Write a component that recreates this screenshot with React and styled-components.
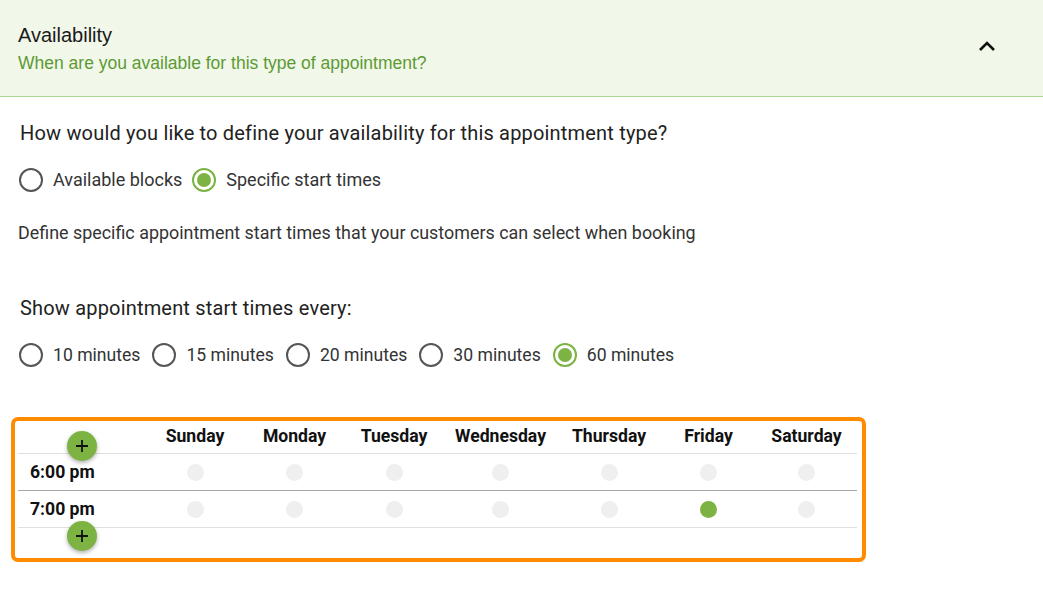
import React, { useState } from "react";
import styled, { createGlobalStyle } from "styled-components";

const GlobalStyle = createGlobalStyle`
  body {
    margin: 0;
    background: #fff;
    font-family: Roboto, "Liberation Sans", sans-serif;
    color: #222;
  }
`;

const GREEN = "#7cb342";
const DAYS = ["Sunday", "Monday", "Tuesday", "Wednesday", "Thursday", "Friday", "Saturday"];
const COLS = "127px 100px 99px 100px 113px 104px 95px 101px";

const Header = styled.div`
  height: 96px;
  background: #f1f8e9;
  border-bottom: 1px solid #aed58e;
  display: flex;
  align-items: center;
  justify-content: space-between;
  padding: 0 47px 0 18px;
  font-family: "Liberation Sans", Arial, sans-serif;
`;
const TitleBlock = styled.div`
  display: flex;
  flex-direction: column;
  gap: 6px;
`;
const Title = styled.div`
  font-size: 20px;
  line-height: 23px;
  color: #1a1a1a;
`;
const Subtitle = styled.div`
  font-size: 17.5px;
  line-height: 20px;
  color: #5d9a35;
`;
const Chevron = styled.svg`
  width: 18px;
  height: 12px;
  margin-top: -4px;
`;

const Body = styled.div`
  padding: 24px 0 0 18px;
`;
const Question = styled.div`
  font-size: 20px;
  letter-spacing: 0.18px;
  padding-left: 2px;
  line-height: 24px;
  color: #222;
`;
const RadioRow = styled.div`
  display: flex;
  align-items: center;
  gap: ${(p) => p.$gap}px;
  margin-top: 23px;
  padding-left: 1px;
`;
const RadioItem = styled.label`
  display: flex;
  align-items: center;
  gap: 10px;
  font-size: ${(p) => p.$fs}px;
  line-height: 24px;
  color: #333;
  cursor: pointer;
`;
const RadioCircle = styled.span`
  width: 24px;
  height: 24px;
  box-sizing: border-box;
  border-radius: 50%;
  border: 2px solid ${(p) => (p.$on ? GREEN : "#555")};
  display: flex;
  align-items: center;
  justify-content: center;
  &::after {
    content: "";
    width: 14px;
    height: 14px;
    border-radius: 50%;
    background: ${(p) => (p.$on ? GREEN : "transparent")};
  }
`;
const Note = styled.div`
  font-size: 17.9px;
  color: #333;
  margin-top: 29px;
  line-height: 24px;
`;
const SubQuestion = styled(Question)`
  margin-top: 51px;
`;

const TableBox = styled.div`
  margin: 50px 0 0 -7px;
  width: 839px;
  border: 4px solid #ff8c00;
  border-radius: 7px;
  padding: 0 5px 0 3px;
  box-sizing: content-box;
`;
const Row = styled.div`
  display: grid;
  grid-template-columns: ${COLS};
  height: ${(p) => p.$h}px;
  align-items: center;
  border-bottom: ${(p) => (p.$line ? `1px solid ${p.$line}` : "none")};
`;
const DayHead = styled.div`
  text-align: center;
  font-weight: 700;
  font-size: 17.6px;
  color: #111;
  padding-bottom: 2px;
`;
const TimeCell = styled.div`
  font-weight: 700;
  font-size: 17.6px;
  color: #111;
  padding-left: 12px;
  height: 100%;
  display: flex;
  align-items: ${(p) => p.$align || "center"};
`;
const PlusButton = styled.button`
  position: relative;
  z-index: 1;
  width: 30px;
  height: 30px;
  border-radius: 50%;
  border: none;
  padding: 0;
  margin-left: 37px;
  background: ${GREEN};
  box-shadow: 0 2px 4px rgba(0, 0, 0, 0.3);
  display: flex;
  align-items: center;
  justify-content: center;
  cursor: pointer;
  margin-top: ${(p) => p.$mt || 0}px;
  margin-bottom: ${(p) => p.$mb || 0}px;
`;
const DotCell = styled.div`
  display: flex;
  justify-content: center;
`;
const Dot = styled.span`
  width: 17px;
  height: 17px;
  border-radius: 50%;
  background: ${(p) => (p.$on ? GREEN : "#efefef")};
  cursor: pointer;
`;

const PlusIcon = () => (
  <svg width="14" height="14" viewBox="0 0 14 14">
    <path d="M7 1v12M1 7h12" stroke="#111" strokeWidth="1.8" />
  </svg>
);

function Radios({ options, value, onChange, fs, gap }) {
  return (
    <RadioRow $gap={gap}>
      {options.map((o) => (
        <RadioItem key={o} $fs={fs} onClick={() => onChange(o)}>
          <RadioCircle $on={value === o} />
          {o}
        </RadioItem>
      ))}
    </RadioRow>
  );
}

export default function App() {
  const [mode, setMode] = useState("Specific start times");
  const [every, setEvery] = useState("60 minutes");
  const [slots, setSlots] = useState({ "7:00 pm-Friday": true });
  const times = ["6:00 pm", "7:00 pm"];

  const toggle = (k) => setSlots((s) => ({ ...s, [k]: !s[k] }));

  return (
    <>
      <GlobalStyle />
      <Header>
        <TitleBlock>
          <Title>Availability</Title>
          <Subtitle>When are you available for this type of appointment?</Subtitle>
        </TitleBlock>
        <Chevron viewBox="0 0 18 12">
          <polyline points="2,10 9,3 16,10" fill="none" stroke="#111" strokeWidth="2.6" />
        </Chevron>
      </Header>
      <Body>
        <Question>How would you like to define your availability for this appointment type?</Question>
        <Radios
          fs={18}
          gap={10}
          options={["Available blocks", "Specific start times"]}
          value={mode}
          onChange={setMode}
        />
        <Note>Define specific appointment start times that your customers can select when booking</Note>
        <SubQuestion>Show appointment start times every:</SubQuestion>
        <Radios
          fs={17.6}
          gap={12}
          options={["10 minutes", "15 minutes", "20 minutes", "30 minutes", "60 minutes"]}
          value={every}
          onChange={setEvery}
        />
        <TableBox>
          <Row $h={32} $line="#e0e0e0">
            <TimeCell $align="flex-end">
              <PlusButton $mb={-8}>
                <PlusIcon />
              </PlusButton>
            </TimeCell>
            {DAYS.map((d) => (
              <DayHead key={d}>{d}</DayHead>
            ))}
          </Row>
          {times.map((t, i) => (
            <Row key={t} $h={36} $line={i === 0 ? "#a8a8a8" : "#e0e0e0"}>
              <TimeCell>{t}</TimeCell>
              {DAYS.map((d) => (
                <DotCell key={d}>
                  <Dot $on={slots[`${t}-${d}`]} onClick={() => toggle(`${t}-${d}`)} />
                </DotCell>
              ))}
            </Row>
          ))}
          <Row $h={30}>
            <TimeCell $align="flex-start">
              <PlusButton $mt={-7}>
                <PlusIcon />
              </PlusButton>
            </TimeCell>
          </Row>
        </TableBox>
      </Body>
    </>
  );
}
